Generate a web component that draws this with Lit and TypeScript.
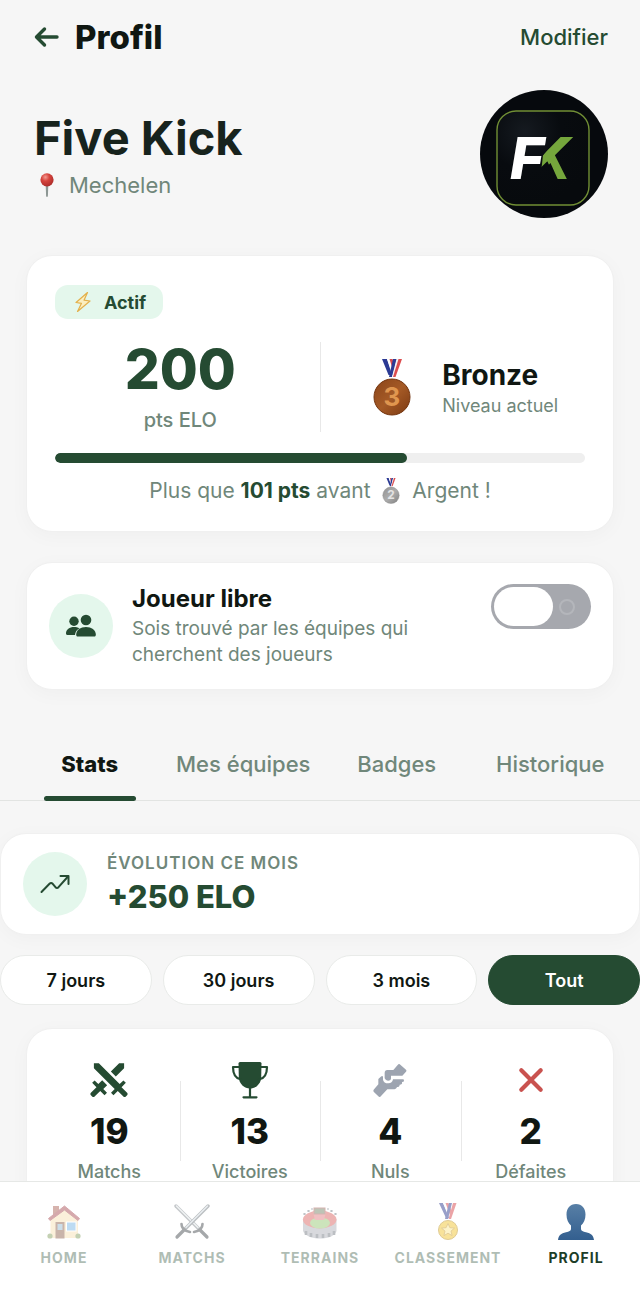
import { LitElement, html, css, svg } from "lit";
import { customElement, property, state } from "lit/decorators.js";
import { classMap } from "lit/directives/class-map.js";

const backArrow = html`<svg width="26" height="22" viewBox="0 0 26 22" fill="none" stroke="currentColor" stroke-width="3.4" stroke-linecap="round" stroke-linejoin="round" aria-hidden="true">
  <path d="M23 11H3M10.500 3 2.500 11l8 8" />
</svg>`;

const pin = html`<svg width="14" height="25" viewBox="0 0 14 25" aria-hidden="true">
  <defs>
    <radialGradient id="pin-head" cx=".38" cy=".3" r=".75">
      <stop offset="0" stop-color="#f39a92" /><stop offset=".4" stop-color="#d6443d" /><stop offset="1" stop-color="#a92a28" />
    </radialGradient>
  </defs>
  <path d="M5.700 12h2.600l-.4 11.200q-.9 1.400-1.800 0z" fill="#8d9794" />
  <circle cx="7" cy="6.800" r="6.600" fill="url(#pin-head)" />
</svg>`;

const avatar = html`<svg class="avatar" viewBox="0 0 128 128" role="img" aria-label="Logo Five Kick">
  <defs>
    <radialGradient id="av-bg" cx=".3" cy=".22" r=".8">
      <stop offset="0" stop-color="#151a20" /><stop offset=".5" stop-color="#080b0f" /><stop offset="1" stop-color="#070a0d" />
    </radialGradient>
    <clipPath id="k-cut"><path d="M77 44H100V92H79L70.500 73 61 83 63 65Z" /></clipPath>
  </defs>
  <circle cx="64" cy="64" r="64" fill="#06090d" />
  <rect x="17" y="21" width="92" height="94" rx="19" fill="url(#av-bg)" stroke="#718f35" stroke-width="1.400" />
  <text x="30" y="89" class="mark" fill="#fff">F</text>
  <text x="48" y="89" class="mark" fill="#75a63c" clip-path="url(#k-cut)">K</text>
</svg>`;

const bolt = html`<svg width="18" height="22" viewBox="0 0 18 22" aria-hidden="true">
  <path d="M13.500 1.500 2 11.500l5.500.8L3.500 20.500 16 10l-6-.8z" fill="#fbeebf" stroke="#e3b04b" stroke-width="1.200" stroke-linejoin="round" />
</svg>`;

const ribbon = svg`
  <path d="M9 0h5l6 16h-4.500z" fill="#2b3a94" />
  <path d="M14 0h3l4 12-2 4z" fill="#fff" />
  <path d="M16.500 0h3l2.500 8-1.500 5z" fill="#d84a4e" />
  <path d="M24 0h-4l-4 18h3z" fill="#2b3a94" />
  <path d="M26 0h-2.500L19 18h2z" fill="#f3f3f6" />
  <path d="M29 0h-3.500L20 18h2.500z" fill="#dc4d4f" />`;

const bronzeMedal = html`<svg class="medal" width="38" height="57" viewBox="0 0 38 57" role="img" aria-label="Médaille de bronze">
  <defs>
    <linearGradient id="bronze" x1="0" y1="0" x2="1" y2="1">
      <stop offset="0" stop-color="#8a4419" /><stop offset=".5" stop-color="#a55a26" /><stop offset="1" stop-color="#7b3912" />
    </linearGradient>
  </defs>
  ${ribbon}
  <circle cx="19" cy="38" r="18" fill="url(#bronze)" stroke="#74350f" />
  <text x="19" y="47" class="digit bronze">3</text>
</svg>`;

const silverMedal = html`<svg class="inline-medal" width="18" height="26" viewBox="0 0 38 57" role="img" aria-label="Médaille d'argent">
  <defs>
    <linearGradient id="silver" x1="0" y1="0" x2="1" y2="1">
      <stop offset="0" stop-color="#929292" /><stop offset=".5" stop-color="#adadad" /><stop offset="1" stop-color="#7f7f7f" />
    </linearGradient>
  </defs>
  ${ribbon}
  <circle cx="19" cy="38" r="18" fill="url(#silver)" stroke="#8b8b8b" />
  <text x="19" y="47" class="digit silver">2</text>
</svg>`;

const people = html`<svg width="32" height="24" viewBox="0 0 32 24" fill="currentColor" aria-hidden="true">
  <circle cx="9" cy="7.300" r="4.700" />
  <circle cx="21" cy="6" r="5.300" />
  <path d="M14.500 14.200C12.800 13.300 11 13 9 13c-4.500 0-8 2.600-8 6.300 0 1 .4 1.700 1.300 1.700H10c.2-2.900 1.900-5.400 4.500-6.800z" />
  <path d="M21 13c-5.500 0-9.800 3-9.800 7.600 0 1.400.5 2 1.500 2h16.600c1 0 1.500-.6 1.500-2C30.800 16 26.500 13 21 13z" />
</svg>`;

const trend = html`<svg width="30" height="20" viewBox="0 0 30 20" fill="none" stroke="currentColor" stroke-width="2" stroke-linecap="round" stroke-linejoin="round" aria-hidden="true">
  <path d="M20.500 2H28.500V10" />
  <path d="M28 2.500 18.500 13.200q-1.500 1.600-3 0l-2.800-3.400q-1.600-1.600-3.200 0L1.500 18" />
</svg>`;

const swords = html`<svg width="42" height="42" viewBox="0 0 24 24" fill="#254b32" aria-hidden="true">
  <path d="M6.200 2.440 18.100 14.340 20.220 12.220 21.630 13.630 19.160 16.100 22.340 19.280C22.730 19.670 22.730 20.300 22.340 20.690L21.630 21.400C21.240 21.790 20.610 21.790 20.220 21.400L17 18.230 14.560 20.700 13.150 19.290 15.270 17.170 3.370 5.270V2.440H6.200M15.890 10 20.630 5.260V2.440H17.800L13.060 7.180 15.890 10M10.940 15 8.110 12.130 5.900 14.340 3.780 12.220 2.370 13.630 4.840 16.100 1.660 19.290C1.270 19.680 1.270 20.310 1.660 20.700L2.370 21.410C2.760 21.800 3.390 21.800 3.780 21.410L7 18.230 9.440 20.700 10.850 19.290 8.730 17.170 10.940 15Z" />
</svg>`;

const trophy = html`<svg width="42" height="42" viewBox="0 0 42 42" aria-hidden="true">
  <path d="M11 3h20q1.500 0 1.500 1.500l-.3 14c-.3 6.500-5.700 11-11.200 11s-10.900-4.500-11.200-11L9.500 4.500Q9.500 3 11 3z" fill="#254b32" />
  <path d="M10 8H4c0 6 2 11.500 8 12.500M32 8h6c0 6-2 11.500-8 12.500M21 28v10M14.500 38.300h13" fill="none" stroke="#254b32" stroke-width="2.200" stroke-linecap="round" stroke-linejoin="round" />
</svg>`;

const handshake = html`<svg width="42" height="42" viewBox="148 116 126 126" fill="#9da4b0" aria-hidden="true">
  <path d="M195 158q0-9 8-9h18l15-17q3-2 6 1l17 15q3 3 0 6l-11 12h-34v8q0 7-9 7-7 0-10-7z" />
  <path d="M176 176l9-8h5v10q2 11 16 11 12 0 14-12h30q3 0 3 4t-6 4q2 8-7 8 0 7-8 7-2 7-12 7h-17l-21 22q-3 2-6-1l-14-14q-2-3 0-6l14-16z" />
</svg>`;

const cross = html`<svg width="42" height="42" viewBox="0 0 42 42" fill="none" stroke="#c9524f" stroke-width="4.200" stroke-linecap="round" aria-hidden="true">
  <path d="M11.300 11.300l19.400 19.400M30.700 11.300l-19.400 19.400" />
</svg>`;

const house = html`<svg width="36" height="36" viewBox="0 0 36 36" aria-hidden="true">
  <rect x="7" y="2" width="6" height="10" fill="#a5584c" />
  <path d="M4.500 14 18 3.500 32 14v20H4.500z" fill="#f7dfae" />
  <path d="M18.500 2 2.500 14.500l1.500 2L18.500 6 32 16.500l1.500-2z" fill="#a4424a" stroke="#a4424a" stroke-width="1" />
  <rect x="9.500" y="18" width="9" height="16.500" fill="#8a5a44" />
  <rect x="11.500" y="20" width="5" height="6" fill="#8fb7cf" />
  <rect x="20.500" y="18" width="9.500" height="9" fill="#6fb0e4" stroke="#fff" />
  <circle cx="4" cy="32" r="2.600" fill="#7d9a58" /><circle cx="32" cy="32" r="2.600" fill="#7d9a58" />
</svg>`;

const crossedSwords = html`<svg width="36" height="36" viewBox="0 0 36 36" fill="none" stroke-linecap="round" aria-hidden="true">
  <path d="M2 2 25 25" stroke="#7d858b" stroke-width="3.400" /><path d="M2.500 2 24 23.500" stroke="#dfe6ea" stroke-width="1.400" />
  <path d="M34 2 11 25" stroke="#6b7379" stroke-width="3.400" /><path d="M33.500 2 12 23.500" stroke="#d3dbe0" stroke-width="1.400" />
  <path d="M7.500 20q0 6.500 8.500 8M28.500 20q0 6.500-8.500 8" stroke="#3a3f44" stroke-width="2.600" />
  <path d="M10 26 3 33M26 26l7 7" stroke="#3a3f44" stroke-width="3.200" />
</svg>`;

const stadium = html`<svg width="36" height="36" viewBox="0 0 36 36" aria-hidden="true">
  <path d="M1 15v12c2 5 9 7.500 17 7.500S33 32 34.500 27V15z" fill="#a9adb5" />
  <ellipse cx="17.700" cy="15.500" rx="16.800" ry="9" fill="#d95b58" />
  <ellipse cx="18" cy="19" rx="10" ry="5.500" fill="#8fc46a" />
  <path d="M11 8h13l-2 8h-9z" fill="#e0757a" />
  <rect x="12" y="4" width="11" height="6" fill="#6f7d60" stroke="#a35a50" />
  <path d="M4 27v4M9 29v4M15 30v4M21 30v4M27 29v4M32 27v4" stroke="#6d727c" stroke-width="2.600" />
  <path d="M2 10h1M6 7h1M10 5h0M26 5h0M29 7h1M33 10h1" stroke="#46515e" stroke-width="1.600" stroke-linecap="round" />
</svg>`;

const goldMedal = html`<svg width="36" height="38" viewBox="0 0 36 38" aria-hidden="true">
  <path d="M9 0h4l7 15h-4z" fill="#1d2c88" /><path d="M13 0h2.500l5 12-1.500 3z" fill="#fff" /><path d="M15.500 0h3l3 8-1.500 4z" fill="#d3363b" />
  <path d="M22 0h-3l-4 16h3z" fill="#1d2c88" /><path d="M26.500 0H23l-4.500 16H21z" fill="#d3363b" />
  <circle cx="18" cy="27" r="9.500" fill="#f0c020" stroke="#b98c14" />
  <path d="M18 20.500l1.900 4.200 4.600.4-3.500 3 1.100 4.500-4.100-2.400-4.100 2.400 1.100-4.500-3.500-3 4.600-.4z" fill="#fbe68a" stroke="#b98616" stroke-width=".8" />
</svg>`;

const bust = html`<svg width="36" height="36" viewBox="0 0 36 36" aria-hidden="true">
  <defs>
    <linearGradient id="bust" x1="0" y1="0" x2="0" y2="1">
      <stop offset="0" stop-color="#587fa6" /><stop offset="1" stop-color="#335f8f" />
    </linearGradient>
  </defs>
  <path d="M18 0c6 0 9.500 4.500 9.500 10.500 0 5-1.800 8.500-4.500 11v3.500c0 2 2 2.500 5 3.200 5 1.200 7.500 3 8 7.800H0c.5-4.800 3-6.600 8-7.800 3-.7 5-1.200 5-3.200v-3.500c-2.700-2.500-4.500-6-4.500-11C8.500 4.500 12 0 18 0z" fill="url(#bust)" />
</svg>`;

const NAV = [
  { id: "home", label: "HOME", icon: house },
  { id: "matchs", label: "MATCHS", icon: crossedSwords },
  { id: "terrains", label: "TERRAINS", icon: stadium },
  { id: "classement", label: "CLASSEMENT", icon: goldMedal },
  { id: "profil", label: "PROFIL", icon: bust },
];

const STATS = [
  { value: 19, label: "Matchs", icon: swords },
  { value: 13, label: "Victoires", icon: trophy },
  { value: 4, label: "Nuls", icon: handshake },
  { value: 2, label: "Défaites", icon: cross },
];

@customElement("bottom-nav")
class BottomNav extends LitElement {
  @property() current = "profil";

  static styles = css`
    :host { display: block; background: #fff; border-top: 1px solid #e6e8e6; }
    nav { display: grid; grid-template-columns: repeat(5, 1fr); padding: 22px 0 44px; }
    a {
      display: flex; flex-direction: column; align-items: center; gap: 9px;
      color: #254b32; text-decoration: none;
      font-size: 14px; line-height: 18px; font-weight: 700; letter-spacing: 1px;
    }
    a > * { opacity: 0.36; }
    a > .icon { opacity: 0.45; }
    a.current { color: #1c3d28; }
    a.current > * { opacity: 1; }
    .icon { display: flex; align-items: center; justify-content: center; height: 36px; }
  `;

  render() {
    return html`<nav aria-label="Navigation principale">
      ${NAV.map(
        (n) => html`<a href="#${n.id}" class=${classMap({ current: n.id === this.current })}>
          <span class="icon">${n.icon}</span><span>${n.label}</span>
        </a>`
      )}
    </nav>`;
  }
}

@customElement("app-root")
class AppRoot extends LitElement {
  @state() private tab = "Stats";
  @state() private period = "Tout";
  @state() private progress = 66.4;

  static styles = css`
    :host {
      --green: #254b32;
      --ink: #101712;
      --muted: #70877a;
      --mint: #e4f7ec;
      display: flex; flex-direction: column; height: 100vh;
      background: #f6f6f6; color: var(--ink);
      font-family: Inter, "Liberation Sans", sans-serif;
    }
    * { box-sizing: border-box; }
    svg { display: block; flex: none; }
    h1, h2, p { margin: 0; }
    button { font: inherit; color: inherit; border: 0; padding: 0; background: none; cursor: pointer; }
    main { flex: 1; min-height: 0; overflow-y: auto; scrollbar-width: none; padding-bottom: 32px; }

    .topbar { display: flex; align-items: center; padding: 14px 32px 0 34px; }
    .back { display: flex; color: var(--green); }
    .topbar h1 { flex: 1; margin-left: 15px; font-size: 33px; line-height: 46px; font-weight: 800; }
    .edit { color: var(--green); font-size: 22px; line-height: 28px; font-weight: 500; }

    .hero { display: flex; align-items: center; justify-content: space-between; padding: 30px 32px 0 34px; }
    .hero h2 { font-size: 47px; line-height: 56px; font-weight: 700; color: #17231d; }
    .place { display: flex; align-items: center; gap: 15px; margin-top: 6px; padding-left: 6px; color: var(--muted); font-size: 22px; line-height: 26px; }
    .avatar { width: 128px; height: 128px; }
    .mark { font: italic 800 58px Inter, sans-serif; }

    .card { background: #fff; border: 1px solid #f0f0f0; border-radius: 26px; box-shadow: 0 4px 20px rgba(0, 0, 0, 0.03); }
    .inset { margin-left: 26px; margin-right: 26px; }

    .elo { margin-top: 37px; padding: 29px 28px 27px; }
    .badge {
      display: flex; align-items: center; gap: 12px; width: fit-content; height: 34px; padding: 0 17px 0 19px;
      border-radius: 13px; background: var(--mint); color: var(--green); font-size: 18px; font-weight: 700;
    }
    .level-row { display: flex; align-items: center; margin-top: 23px; }
    .score { flex: 1; text-align: center; }
    .score strong { display: block; font-size: 55px; line-height: 54px; font-weight: 800; color: var(--green); }
    .score span { display: block; margin-top: 12px; font-size: 20px; line-height: 24px; font-weight: 500; color: var(--muted); }
    .rule { width: 1px; height: 90px; margin: 0 14px; background: #e8e8e8; }
    .level { flex: 1; display: flex; align-items: center; justify-content: center; gap: 31px; }
    .medal { margin-left: 12px; }
    .level strong { display: block; font-size: 28px; line-height: 34px; font-weight: 700; }
    .level span { display: block; margin-top: 3px; font-size: 18px; line-height: 22px; color: var(--muted); }
    .digit { font: 700 26px Inter, sans-serif; text-anchor: middle; }
    .bronze { fill: #e0964f; }
    .silver { fill: #e4e4e4; }
    .track { height: 10px; margin-top: 21px; border-radius: 5px; background: #efefef; overflow: hidden; }
    .fill { height: 100%; border-radius: 5px; background: var(--green); }
    .next { display: flex; justify-content: center; align-items: center; margin-top: 15px; font-size: 21px; line-height: 26px; color: var(--muted); white-space: pre; }
    .next b { font-weight: 700; color: var(--green); }
    .inline-medal { margin: 0 6px; }

    .free { display: flex; align-items: center; gap: 19px; margin-top: 30px; padding: 21px 22px; }
    .disc { display: flex; align-items: center; justify-content: center; flex: none; width: 64px; height: 64px; border-radius: 50%; background: var(--mint); color: var(--green); }
    .free label { flex: 1; font-size: 19px; line-height: 26px; color: var(--muted); }
    .free label b { display: block; margin-bottom: 2px; font-size: 24px; line-height: 30px; font-weight: 700; color: var(--ink); }
    .switch {
      appearance: none; display: flex; align-items: center; align-self: flex-start; flex: none; justify-content: space-between;
      width: 100px; height: 45px; margin: 0 0 0 20px; padding: 3px 16px 3px 3px; border-radius: 23px; background: #a6a8ae; cursor: pointer;
    }
    .switch::before { content: ""; width: 59px; height: 39px; border-radius: 20px; background: #fff; }
    .switch::after { content: ""; width: 16px; height: 16px; border: 2px solid #b4b6bb; border-radius: 50%; box-sizing: border-box; }
    .switch:checked { flex-direction: row-reverse; padding: 3px 3px 3px 16px; background: var(--green); }

    .tabs { display: grid; grid-template-columns: repeat(4, 1fr); margin-top: 38px; padding: 0 13px; border-bottom: 1px solid #e2e4e2; }
    .tab { position: relative; height: 72px; font-size: 22px; font-weight: 500; color: var(--muted); white-space: nowrap; }
    .tab.active { font-weight: 800; color: var(--ink); }
    .tab.active::after { content: ""; position: absolute; left: 20%; right: 20%; bottom: -1px; height: 5px; border-radius: 3px; background: var(--green); }

    .trend { display: flex; align-items: center; gap: 20px; margin-top: 32px; padding: 18px 22px; }
    .trend span { display: block; font-size: 17px; line-height: 22px; font-weight: 600; letter-spacing: 1px; color: var(--muted); }
    .trend strong { display: block; margin-top: 4px; font-size: 31px; line-height: 38px; font-weight: 800; color: var(--green); }

    .periods { display: grid; grid-template-columns: repeat(4, 1fr); gap: 11px; margin-top: 20px; }
    .period { height: 50px; border: 1px solid #e9ebe9; border-radius: 25px; background: #fff; font-size: 18px; font-weight: 600; }
    .period.active { background: var(--green); border-color: var(--green); color: #fff; }

    .stats { display: grid; grid-template-columns: repeat(4, 1fr); align-items: center; margin-top: 23px; padding: 30px 12px; }
    .stat { display: flex; flex-direction: column; align-items: center; position: relative; }
    .stat + .stat::before { content: ""; position: absolute; left: 0; top: 22px; height: 80px; width: 1px; background: #e8e8e8; }
    .stat strong { margin-top: 10px; font-size: 35px; line-height: 40px; font-weight: 800; }
    .stat span { margin-top: 10px; font-size: 18px; line-height: 22px; font-weight: 500; color: var(--muted); }
  `;

  render() {
    return html`
      <main>
        <header class="topbar">
          <button class="back" aria-label="Retour">${backArrow}</button>
          <h1>Profil</h1>
          <button class="edit">Modifier</button>
        </header>

        <section class="hero">
          <div>
            <h2>Five Kick</h2>
            <p class="place">${pin}<span>Mechelen</span></p>
          </div>
          ${avatar}
        </section>

        <section class="card inset elo">
          <div class="badge">${bolt}<span>Actif</span></div>
          <div class="level-row">
            <div class="score"><strong>200</strong><span>pts ELO</span></div>
            <div class="rule"></div>
            <div class="level">
              ${bronzeMedal}
              <div><strong>Bronze</strong><span>Niveau actuel</span></div>
            </div>
          </div>
          <div class="track" role="progressbar" aria-label="Progression" aria-valuenow=${this.progress}>
            <div class="fill" style="width:${this.progress}%"></div>
          </div>
          <p class="next"><span>Plus que <b>101 pts</b> avant </span>${silverMedal}<span> Argent !</span></p>
        </section>

        <section class="card inset free">
          <div class="disc">${people}</div>
          <label for="free"><b>Joueur libre</b>Sois trouvé par les équipes qui cherchent des joueurs</label>
          <input id="free" class="switch" type="checkbox" role="switch" />
        </section>

        <div class="tabs" role="tablist">
          ${["Stats", "Mes équipes", "Badges", "Historique"].map(
            (t) => html`<button role="tab" aria-selected=${t === this.tab} class=${classMap({ tab: true, active: t === this.tab })} @click=${() => (this.tab = t)}>${t}</button>`
          )}
        </div>

        <section class="card trend">
          <div class="disc">${trend}</div>
          <div><span>ÉVOLUTION CE MOIS</span><strong>+250 ELO</strong></div>
        </section>

        <div class="periods">
          ${["7 jours", "30 jours", "3 mois", "Tout"].map(
            (p) => html`<button class=${classMap({ period: true, active: p === this.period })} @click=${() => (this.period = p)}>${p}</button>`
          )}
        </div>

        <section class="card inset stats">
          ${STATS.map((s) => html`<div class="stat">${s.icon}<strong>${s.value}</strong><span>${s.label}</span></div>`)}
        </section>
      </main>
      <bottom-nav current="profil"></bottom-nav>
    `;
  }
}
